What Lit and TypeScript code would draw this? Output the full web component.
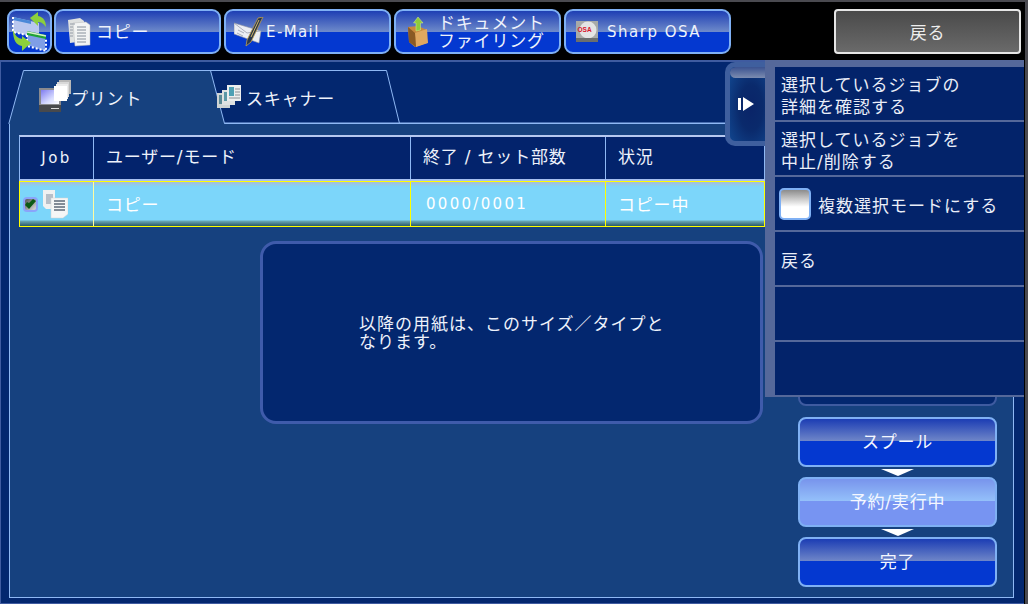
import { LitElement, html, css, svg } from "lit";
import { customElement } from "lit/decorators.js";

const copyIcon = svg`<svg class="ic" width="26" height="30" viewBox="0 0 26 30">
  <path d="M2 3 L14 1 L18 4 L18 24 L4 26 Z" fill="#dfe1e1"/>
  <path d="M7 6 L20 5 L24 8 L24 28 L9 29 Z" fill="#f3f4f4" stroke="#b6b8b8" stroke-width=".5"/>
  <path d="M11 10h9M11 13h9M11 16h9M11 19h9M11 22h9M11 25h9" stroke="#7c8490" stroke-width=".9"/>
  <path d="M4 7h5M4 10h3M4 13h3M4 16h3M4 19h3" stroke="#8c94a0" stroke-width=".9"/>
</svg>`;

const mailIcon = svg`<svg class="ic" width="34" height="30" viewBox="0 0 34 30">
  <path d="M0 6 L27 14 L25 26 L0 17 Z" fill="#eceef4" stroke="#8a90a0" stroke-width=".6"/>
  <path d="M0 6 L13 16 L26 14" fill="none" stroke="#9aa0b0" stroke-width=".8"/>
  <path d="M4 13l6 3M3 16l6 3" stroke="#8a90a0" stroke-width=".7"/>
  <path d="M24 1 L29 0 L26 6 L17 25 L12 29 L13 23 Z" fill="#27364e" stroke="#c0a050" stroke-width=".8"/>
  <path d="M25 3l-8 17" stroke="#d8b860" stroke-width="1"/>
</svg>`;

const folderIcon = svg`<svg class="ic" width="22" height="30" viewBox="0 0 22 30">
  <path d="M0 10 L10 9 L19 13 L19 26 L7 30 L1 25 Z" fill="#c98a3e"/>
  <path d="M7 16 L19 12 L20 26 L8 30 Z" fill="#e0a860"/>
  <path d="M0 10 L1 25 L8 30 L7 16 Z" fill="#8a5a24"/>
  <path d="M10 0 L15 6 L12.500 6 L12.500 13 L8 14 L8 6 L5.500 6 Z" fill="#8ecb3c" stroke="#d8ef90" stroke-width=".5"/>
</svg>`;

const osaIcon = svg`<svg class="ic" width="22" height="22" viewBox="0 0 22 22">
  <rect x="0" y="0" width="22" height="21" fill="#a8aaa8"/>
  <circle cx="12" cy="9" r="8.500" fill="#e4e4e4"/>
  <rect x="0" y="17" width="22" height="4" fill="#6b6e6e"/>
  <text x="1.500" y="11" font-size="6.500" font-weight="700" fill="#d8142c" font-family="Liberation Sans" letter-spacing="0">OSA</text>
</svg>`;

const homeIcon = svg`<svg width="44" height="44" viewBox="0 0 44 44">
  <path d="M6 7 L32 13 L32 28 L6 22 Z" fill="#b9c7ef"/>
  <path d="M6 7 L24 11 L24 14 L6 10 Z" fill="#4a88d8"/>
  <path d="M6 7 V22 L32 28" fill="none" stroke="#fff" stroke-width="2" stroke-dasharray="2 2"/>
  <path d="M20 24 L38 28 L38 44 L20 38 Z" fill="#7f9ee6" transform="translate(0 -3)"/>
  <path d="M20 21 L39 25 L39 29 L20 25 Z" fill="#1ea336"/>
  <path d="M20 22 L39 26" stroke="#d8f0c8" stroke-width="1.500"/>
  <path d="M20 25 V36 L39 41 V29" fill="none" stroke="#fff" stroke-width="2" stroke-dasharray="2 2"/>
  <path d="M23 8 L31 2 L31 6 C37 7 39 12 39 17 C36 13 34 12 31 12 L31 16 Z" fill="#8ccf3c"/>
  <path d="M24 36 L15 44 L15 39 C9 38 6 33 6 23 C9 30 11 31 15 32 L15 29 Z" fill="#8ccf3c" transform="translate(0 -3)"/>
</svg>`;

const monitorIcon = svg`<svg class="ic" width="32" height="34" viewBox="0 0 32 34">
  <defs><linearGradient id="scr" x1="0" y1="0" x2="1" y2="1"><stop offset="0" stop-color="#7f7cf0"/><stop offset=".6" stop-color="#d8dcff"/><stop offset="1" stop-color="#fff"/></linearGradient></defs>
  <rect x="0" y="8" width="22" height="18" fill="#8a8a8e"/>
  <rect x="2" y="10" width="18" height="14" fill="url(#scr)"/>
  <rect x="0" y="25" width="22" height="7" fill="#48494c"/>
  <rect x="12" y="28" width="8" height="1" fill="#d8d8d8"/>
  <rect x="20" y="0" width="12" height="14" fill="#b8b8b8"/>
  <rect x="18" y="2" width="12" height="15" fill="#d8d8d8"/>
  <rect x="17" y="4" width="12" height="15" fill="#ececec"/>
  <rect x="15" y="6" width="13" height="15" fill="#fff"/>
</svg>`;

const scanIcon = svg`<svg class="ic" width="24" height="25" viewBox="0 0 24 25">
  <rect x="0" y="8" width="13" height="15" fill="#cfd4d4"/>
  <rect x="2" y="10" width="5" height="9" fill="#5b8a96"/>
  <rect x="5" y="5" width="13" height="15" fill="#dfe2e2"/>
  <rect x="7" y="7" width="5" height="9" fill="#5b98a6"/>
  <rect x="10" y="0" width="14" height="16" fill="#eceeee"/>
  <rect x="12" y="2" width="5" height="9" fill="#4da0b4"/>
  <path d="M18 4h5M18 7h5M18 10h5M12 13h11" stroke="#8a9096" stroke-width="1"/>
</svg>`;

const jobDocs = svg`<svg width="25" height="29" viewBox="0 0 25 29">
  <path d="M0 0 H12 V19 H3 L0 16 Z" fill="#f0f1f1"/>
  <path d="M3 5h7M3 7h7M3 9h7M3 11h7M3 13h7" stroke="#7e8ea0" stroke-width="1.100"/>
  <path d="M8 8 H25 V24 L20 28 H8 Z" fill="#f5f6f6" stroke="#d0d2d2" stroke-width=".5"/>
  <path d="M11 11h11M11 14h11M11 17h11M11 20h11" stroke="#5d6a78" stroke-width="1.500"/>
</svg>`;

const arrow = svg`<svg width="33" height="7" viewBox="0 0 33 7"><path d="M0 0 H33 L17 7 Z" fill="#fff"/></svg>`;

@customElement("app-root")
export class AppRoot extends LitElement {
  static styles = css`
    :host {
      display: flex;
      flex-direction: column;
      position: relative;
      width: 1028px;
      height: 604px;
      overflow: hidden;
      background: #000;
      color: #eef2fb;
      font-family: "DejaVu Sans", "Noto Sans CJK JP", sans-serif;
      font-size: 17px;
      letter-spacing: 0.8px;
      border-top: 2px solid #4a4a50;
      border-right: 3px solid #4a4a50;
      box-sizing: border-box;
    }
    .top {
      height: 58px;
      flex: none;
      display: flex;
      align-items: flex-start;
      padding: 7px 4px 0 7px;
      gap: 3px;
      box-sizing: border-box;
    }
    .nav {
      box-sizing: border-box;
      height: 45px;
      width: 167px;
      border: 2px solid #7fb0f4;
      border-radius: 9px;
      background: linear-gradient(#1e3fb4 0, #6f8bca 21px, #0438d0 21px, #0438d0 100%);
      display: flex;
      align-items: center;
      padding-left: 9px;
      line-height: 18px;
      white-space: nowrap;
    }
    .nav .ic { flex: none; }
    .nav.left { padding-left: 10px; }
    .nav.left .label { margin-left: 4px; }
    .nav.mail { padding-left: 8px; }
    .nav.mail .label { font-size: 15px; letter-spacing: 1.400px; margin-left: -2px; }
    .nav.doc .ic { margin-left: 3px; }
    .nav.doc .label { margin-left: 8px; }
    .nav.osa .ic { margin-left: 1px; }
    .nav.osa .label { margin-left: 9px; font-size: 15px; letter-spacing: 1.500px; }
    .home {
      box-sizing: border-box;
      width: 45px;
      height: 45px;
      margin-right: -1px;
      border: 2px solid #7fb0f4;
      border-radius: 9px;
      background: linear-gradient(#1e3fb4 0, #6f8bca 21px, #0438d0 21px, #0438d0 100%);
      overflow: hidden;
      flex: none;
    }
    .home svg { display: block; margin: -1px 0 0 -2px; }
    .back {
      box-sizing: border-box;
      margin-left: auto;
      width: 187px;
      height: 45px;
      border: 2px solid #e6e6e6;
      border-radius: 4px;
      background: linear-gradient(#4a4a4a, #6a6a6a);
      display: flex;
      align-items: center;
      justify-content: center;
      color: #eee;
    }
    .main {
      flex: 1;
      min-height: 0;
      display: flex;
      flex-direction: column;
      box-sizing: border-box;
      background: #03276f;
      border-top: 2px solid #3f5ba0;
      border-bottom: 1px solid #3f5ba0;
      border-left: 1px solid #3f5ba0;
      margin-right: 1px;
    }
    .tabs {
      flex: none;
      height: 62px;
      position: relative;
    }
    .tabs svg.shape { position: absolute; left: -1px; top: 0; }
    .tab {
      position: absolute;
      display: flex;
      align-items: center;
      height: 36px;
      white-space: nowrap;
    }
    .tab.t1 { left: 38px; top: 17px; }
    .tab.t2 { left: 216px; top: 17px; }
    .tab.t1 .ic { margin-right: 0; }
    .tab.t2 .ic { margin-right: 5px; }
    .frame {
      flex: 1;
      min-height: 0;
      margin: 0 10px 5px 8px;
      background: #16417f;
      border: 1px solid #8fb8f4;
      border-top: none;
      box-sizing: border-box;
      display: flex;
      padding: 11px 15px 10px 9px;
    }
    .table { width: 746px; flex: none; }
    .thead, .trow {
      display: grid;
      grid-template-columns: 74px 317px 195px 1fr;
      box-sizing: border-box;
    }
    .thead {
      height: 46px;
      background: #03236c;
      border-top: 2px solid #b6c8f0;
      border-bottom: 2px solid #a6c0f0;
      border-left: 1px solid #8fb8f4;
    }
    .thead > div {
      display: flex;
      align-items: center;
      padding-left: 12px;
      border-right: 1px solid #8fb8f4;
      padding-bottom: 6px;
    }
    .thead > div:first-child { justify-content: center; padding: 0 0 1px; font-size: 15px; letter-spacing: 2.400px; }
    .trow {
      height: 46px;
      border-top: 1px solid #ffff00;
      border-bottom: 1px solid #ffff00;
      border-left: 1px solid #ffff00;
      background: linear-gradient(#a8bcd8 0, #7cd6fa 5px, #7cd6fa 38px, #6aa8b8 39px, #2c5a66 44px);
      color: #fff;
    }
    .trow > div {
      display: flex;
      align-items: center;
      padding-left: 12px;
      padding-bottom: 2px;
      border-right: 1px solid #ffff00;
      white-space: nowrap;
    }
    .trow > div:first-child {
      padding: 0 0 0 3px;
      gap: 5px;
      border-right-color: #fffca0;
    }
    .trow .num { letter-spacing: 2.300px; font-size: 15px; padding-left: 15px; padding-bottom: 0; }
    .check {
      width: 15px;
      height: 15px;
      box-sizing: border-box;
      border: 2px solid #8aa4fa;
      border-radius: 4px;
      background: linear-gradient(135deg, #555, #ddd);
      display: flex;
      align-items: center;
      justify-content: center;
    }
    .steps {
      margin-left: 33px;
      width: 199px;
      display: flex;
      flex-direction: column;
      justify-content: flex-end;
      flex: none;
    }
    .step {
      box-sizing: border-box;
      height: 50px;
      border: 2px solid #7fb0f4;
      border-radius: 8px;
      background: linear-gradient(#1c3db4 0, #6f86c8 22px, #0438d0 22px);
      display: flex;
      align-items: center;
      justify-content: center;
      padding-bottom: 3px;
      color: #f4f7ff;
      flex: none;
    }
    .step.on { background: linear-gradient(#7894ec 0, #94c0fa 22px, #7794f2 22px); }
    .step.ghost { border-color: #3f5ba0; background: #03276f; }
    .arrow {
      flex: none;
      height: 10px;
      display: flex;
      justify-content: center;
      align-items: center;
    }
    .arrow.wide { height: 11px; }
    .dialog {
      position: absolute;
      left: 260px;
      top: 239px;
      width: 503px;
      height: 183px;
      box-sizing: border-box;
      background: #03276f;
      border: 3px solid #3f5bab;
      border-radius: 16px;
      padding: 71px 0 0 96px;
      line-height: 18px;
      letter-spacing: 1px;
      white-space: nowrap;
    }
    .drawer {
      position: absolute;
      left: 725px;
      top: 58px;
      display: flex;
      align-items: flex-start;
    }
    .handle {
      box-sizing: border-box;
      width: 40px;
      height: 84px;
      margin-top: 2px;
      border: 5px solid #3f5f9e;
      border-right: none;
      border-radius: 10px 0 0 10px;
      background: radial-gradient(ellipse at 60% 55%, #0a2468 0, #0a2a6c 40%, #124a94 100%);
      position: relative;
      display: flex;
      align-items: center;
      justify-content: center;
      padding: 0 4px 0 0;
    }
    .handle::before {
      content: "";
      position: absolute;
      left: 0;
      right: 0;
      top: 0;
      height: 11px;
      border-radius: 6px 0 0 6px;
      background: linear-gradient(#3a5290, #7c8cb0);
    }
    .menu {
      box-sizing: border-box;
      width: 259px;
      height: 337px;
      background: #55689a;
      padding: 7px 0 2px 10px;
      display: flex;
      flex-direction: column;
      gap: 2px;
      letter-spacing: 1px;
    }
    .item {
      flex: none;
      box-sizing: border-box;
      height: 53px;
      background: #03236a;
      display: flex;
      align-items: center;
      padding: 4px 0 0 6px;
      line-height: 22px;
      color: #eaeef8;
      white-space: nowrap;
    }
    .item .box {
      flex: none;
      box-sizing: border-box;
      width: 32px;
      height: 32px;
      margin: -4px 7px 0 -2px;
      border: 2px solid #7fb0f4;
      border-radius: 5px;
      background: linear-gradient(#8c8c8c 0, #fff 60%, #fff 100%);
    }
  `;

  render() {
    return html`
      <div class="top">
        <div class="home">${homeIcon}</div>
        <div class="nav left">${copyIcon}<span class="label">コピー</span></div>
        <div class="nav mail">${mailIcon}<span class="label">E-Mail</span></div>
        <div class="nav doc">${folderIcon}<span class="label">ドキュメント<br />ファイリング</span></div>
        <div class="nav osa">${osaIcon}<span class="label">Sharp OSA</span></div>
        <div class="back">戻る</div>
      </div>
      <div class="main">
        <div class="tabs">
          <svg class="shape" width="1024" height="62" viewBox="0 0 1024 62">
            <path d="M9 62 L9 61 L23.500 8.500 L210.500 8.500 L224.500 62 Z" fill="#16417f"/>
            <path d="M9 62 L9 61 L23.500 8.500 L386.500 8.500 L399.500 61.500 L224.500 61.500 L210.500 8.500" fill="none" stroke="#8fb8f4" stroke-width="1"/>
            <path d="M224.500 61.500 L1014 61.500" stroke="#8fb8f4" stroke-width="2"/>
          </svg>
          <div class="tab t1">${monitorIcon}<span>プリント</span></div>
          <div class="tab t2">${scanIcon}<span>スキャナー</span></div>
        </div>
        <div class="frame">
          <div class="table">
            <div class="thead">
              <div>Job</div><div>ユーザー/モード</div><div>終了 / セット部数</div><div>状況</div>
            </div>
            <div class="trow">
              <div>
                <span class="check">
                  <svg width="11" height="11" viewBox="0 0 11 11"><path d="M0 6 L4 10 L11 2 L8 0 L4 4 L2 3 Z" fill="#0c5a16"/></svg>
                </span>
                ${jobDocs}
              </div>
              <div>コピー</div>
              <div class="num">0000/0001</div>
              <div>コピー中</div>
            </div>
          </div>
          <div class="steps">
            <div class="step ghost"></div>
            <div class="arrow wide"></div>
            <div class="step">スプール</div>
            <div class="arrow">${arrow}</div>
            <div class="step on">予約/実行中</div>
            <div class="arrow">${arrow}</div>
            <div class="step">完了</div>
          </div>
        </div>
      </div>
      <div class="dialog">以降の用紙は、このサイズ／タイプと<br />なります。</div>
      <div class="drawer">
        <div class="handle">
          <svg width="16" height="14" viewBox="0 0 16 14"><path d="M0 1h3v12H0z M5 0 L16 7 L5 14 Z" fill="#fff"/></svg>
        </div>
        <div class="menu">
          <div class="item"><span>選択しているジョブの<br />詳細を確認する</span></div>
          <div class="item"><span>選択しているジョブを<br />中止/削除する</span></div>
          <div class="item"><span class="box"></span>複数選択モードにする</div>
          <div class="item">戻る</div>
          <div class="item"></div>
          <div class="item"></div>
        </div>
      </div>
    `;
  }
}
